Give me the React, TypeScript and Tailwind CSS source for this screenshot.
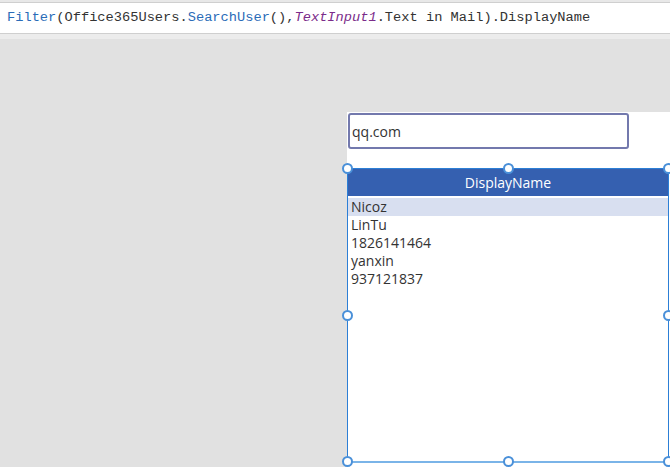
import React from 'react';

const names = ['Nicoz', 'LinTu', '1826141464', 'yanxin', '937121837'];

const Handle: React.FC<{ className: string }> = ({ className }) => (
  <span
    className={`absolute w-[11px] h-[11px] rounded-full bg-white border-2 border-[#4a90d9] ${className}`}
  />
);

const App: React.FC = () => {
  return (
    <div className="w-[670px] h-[467px] overflow-hidden bg-[#e1e1e1] flex flex-col">
      {/* Formula bar */}
      <div className="h-[2px] bg-[#e8e8e8]" />
      <div className="h-[32px] bg-white border-y border-[#cfcfcf] flex items-center pl-[7px] font-['Liberation_Mono',monospace] text-[13.7px] text-[#333] whitespace-nowrap">
        <span className="text-[#2b6cb8]">Filter</span>
        <span>(Office365Users.</span>
        <span className="text-[#2b6cb8]">SearchUser</span>
        <span>(),</span>
        <span className="italic text-[#7b2c8a]">TextInput1</span>
        <span>.Text in Mail).DisplayName</span>
      </div>
      <div className="h-[5px] bg-[#ececec]" />

      {/* Canvas */}
      <div className="flex-1 pl-[347px] pt-[73px]">
        <div className="h-full bg-white flex flex-col font-['Open_Sans',sans-serif]">
          <div className="h-[36px] w-[281px] ml-[1px] mt-[1px] border-2 border-[#7379ad] rounded-[3px] flex items-center pl-[2px] text-[14px] text-[#333]">
            qq.com
          </div>

          <div className="relative mt-[19px] w-[322px] h-[295px] border border-[#2c7fd6] border-b-2 border-b-[#7ab4e8]">
            <div className="h-[27px] bg-[#3560b0] text-white text-[14px] flex items-center justify-center">
              DisplayName
            </div>
            <div className="pt-[2px]">
              {names.map((n, i) => (
                <div
                  key={n}
                  className={`h-[18px] leading-[18px] pl-[3px] text-[14px] text-[#333] ${i === 0 ? 'bg-[#d8dff0]' : ''}`}
                >
                  {n}
                </div>
              ))}
            </div>

            <Handle className="-left-[6px] -top-[6px]" />
            <Handle className="left-[155px] -top-[6px]" />
            <Handle className="-right-[6px] -top-[6px]" />
            <Handle className="-left-[6px] top-[141px]" />
            <Handle className="-right-[6px] top-[141px]" />
            <Handle className="-left-[6px] -bottom-[6px]" />
            <Handle className="left-[155px] -bottom-[6px]" />
            <Handle className="-right-[6px] -bottom-[6px]" />
          </div>
        </div>
      </div>
    </div>
  );
};

export default App;
